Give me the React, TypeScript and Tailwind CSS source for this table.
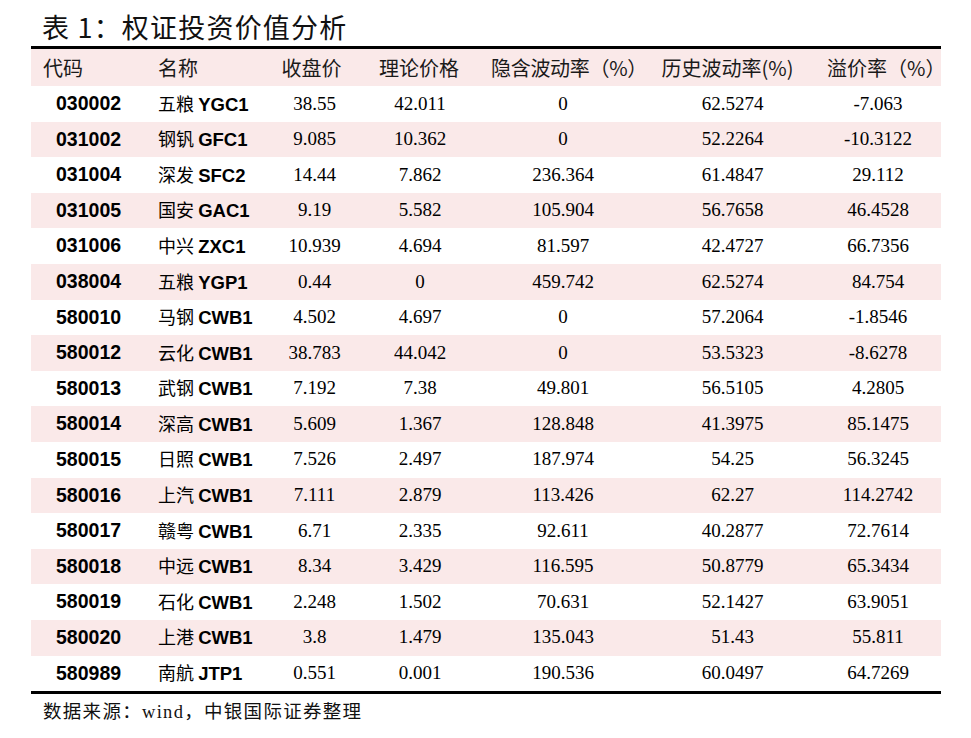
const rows: [string, string, string, string, string, string, string][] = [
  ["030002", "五粮 YGC1", "38.55", "42.011", "0", "62.5274", "-7.063"],
  ["031002", "钢钒 GFC1", "9.085", "10.362", "0", "52.2264", "-10.3122"],
  ["031004", "深发 SFC2", "14.44", "7.862", "236.364", "61.4847", "29.112"],
  ["031005", "国安 GAC1", "9.19", "5.582", "105.904", "56.7658", "46.4528"],
  ["031006", "中兴 ZXC1", "10.939", "4.694", "81.597", "42.4727", "66.7356"],
  ["038004", "五粮 YGP1", "0.44", "0", "459.742", "62.5274", "84.754"],
  ["580010", "马钢 CWB1", "4.502", "4.697", "0", "57.2064", "-1.8546"],
  ["580012", "云化 CWB1", "38.783", "44.042", "0", "53.5323", "-8.6278"],
  ["580013", "武钢 CWB1", "7.192", "7.38", "49.801", "56.5105", "4.2805"],
  ["580014", "深高 CWB1", "5.609", "1.367", "128.848", "41.3975", "85.1475"],
  ["580015", "日照 CWB1", "7.526", "2.497", "187.974", "54.25", "56.3245"],
  ["580016", "上汽 CWB1", "7.111", "2.879", "113.426", "62.27", "114.2742"],
  ["580017", "赣粤 CWB1", "6.71", "2.335", "92.611", "40.2877", "72.7614"],
  ["580018", "中远 CWB1", "8.34", "3.429", "116.595", "50.8779", "65.3434"],
  ["580019", "石化 CWB1", "2.248", "1.502", "70.631", "52.1427", "63.9051"],
  ["580020", "上港 CWB1", "3.8", "1.479", "135.043", "51.43", "55.811"],
  ["580989", "南航 JTP1", "0.551", "0.001", "190.536", "60.0497", "64.7269"],
];

const cols = "grid grid-cols-[106px_118px_105px_128px_170px_149px_134px]";

export default function App() {
  return (
    <div className="w-[971px] h-[738px] bg-white text-black pl-[31px]">
      {/* 标题 */}
      <div className="h-[46px] pt-[13px] pl-[11px] text-[27px] tracking-[1.2px] leading-none font-['Noto_Sans_CJK_SC',sans-serif] text-[#111]">
        表 1：权证投资价值分析
      </div>

      <div className="w-[910px] border-t-[3px] border-b-[3px] border-black">
        {/* Header */}
        <div className={`${cols} h-[37px] items-center bg-[#fae9e9] text-[20px] leading-none whitespace-nowrap font-['Noto_Sans_CJK_SC',sans-serif] text-[#1a1a1a]`}>
          <div className="pl-[12px]">代码</div>
          <div className="pl-[21px]">名称</div>
          <div className="text-center pl-[8px]">收盘价</div>
          <div className="text-center pr-[10px]">理论价格</div>
          <div className="text-center pr-[8px] tracking-[-0.3px]">隐含波动率（%）</div>
          <div className="text-center pr-[10px]">历史波动率(%)</div>
          <div className="text-center pl-[20px]">溢价率（%）</div>
        </div>

        {rows.map((r, i) => {
          const [cn, en] = r[1].split(" ");
          return (
            <div
              key={r[0]}
              className={`${cols} h-[35.6px] items-center ${i % 2 === 1 ? "bg-[#fae9e9]" : "bg-white"}`}
            >
              <div className="pl-[25px] text-[19.5px] font-bold font-['Liberation_Sans',Arial,sans-serif] leading-none">
                {r[0]}
              </div>
              <div className="pl-[21px] leading-none whitespace-nowrap">
                <span className="text-[18px] font-['Noto_Sans_CJK_SC',sans-serif]">{cn}</span>{" "}
                <span className="text-[18.5px] font-bold font-['Liberation_Sans',Arial,sans-serif]">{en}</span>
              </div>
              <div className="text-center pl-[14px] text-[19px] font-['Liberation_Serif','Times_New_Roman',serif]">{r[2]}</div>
              <div className="text-center pr-[8px] text-[19px] font-['Liberation_Serif','Times_New_Roman',serif]">{r[3]}</div>
              <div className="text-center pr-[20px] text-[19px] font-['Liberation_Serif','Times_New_Roman',serif]">{r[4]}</div>
              <div className="text-center text-[19px] font-['Liberation_Serif','Times_New_Roman',serif]">{r[5]}</div>
              <div className="text-center pl-[8px] text-[19px] font-['Liberation_Serif','Times_New_Roman',serif]">{r[6]}</div>
            </div>
          );
        })}
      </div>

      {/* 资料来源 */}
      <div className="mt-[9px] pl-[12px] text-[18.5px] tracking-[1.3px] leading-none font-['Liberation_Serif','Noto_Sans_CJK_SC',serif] text-[#111]">
        数据来源：wind，中银国际证券整理
      </div>
    </div>
  );
}
